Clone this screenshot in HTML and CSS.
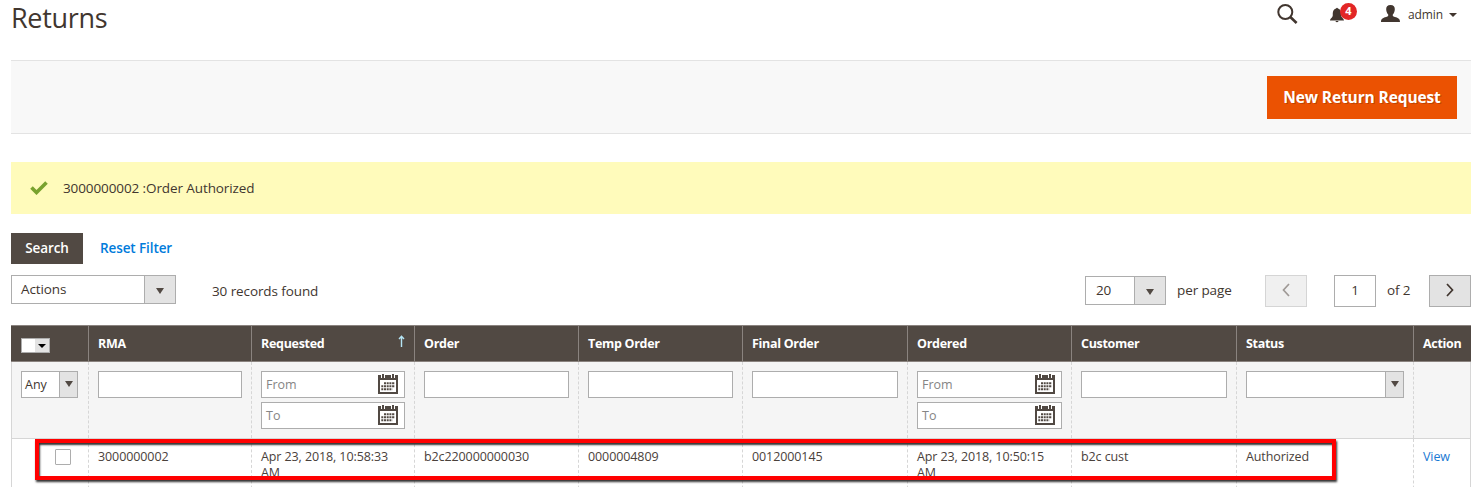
FILE: index.html
```html
<!DOCTYPE html>
<html lang="en">
<head>
<meta charset="utf-8">
<title>Returns</title>
<link rel="stylesheet" href="styles.css">
</head>
<body>
<svg width="0" height="0" class="defs">
  <symbol id="calendar" viewBox="0 0 20 20">
    <path fill="#514943" fill-rule="evenodd" d="M0 1h20v19H0zM2 6v12h16V6z"/>
    <path fill="#fff" d="M3 0h4v4H3zM13 0h4v4h-4z"/>
    <path fill="#514943" d="M4 0h2v4H4zM14 0h2v4h-2z"/>
    <path fill="none" stroke="#514943" stroke-width="2" stroke-dasharray="2 .7" d="M6 9.2h11M3.300 12.200H17M3.300 15.200h11"/>
  </symbol>
</svg>
<header class="top">
  <h1 class="title">Returns</h1>
  <div class="tools">
    <svg class="search-icon" width="21" height="20" viewBox="0 0 21 20" fill="none" stroke="#41362f"><circle cx="8.3" cy="8" r="7" stroke-width="2"/><path d="M13.3 13l6.3 6" stroke-width="2.6"/></svg>
    <div class="bell">
      <svg width="14" height="16" viewBox="0 0 14 16" fill="#41362f"><path d="M6 1.5Q7 0 8 1.5C11 2.5 11.2 5 11.2 8c0 3 2.8 3.3 2.8 5.500H0C0 11.300 2.800 11 2.800 8 2.800 5 3 2.500 6 1.500zM5.300 14h3.400q-1.700 2.500-3.400 0z"/></svg>
      <span class="badge">4</span>
    </div>
    <svg class="user-icon" width="19" height="17" viewBox="0 0 19 17" fill="#41362f"><path d="M9.500 0c3 0 4.600 1.800 4.300 4.800-.2 2.200-1 3.800-2 4.700-.3 1.600.4 2 2 2.500 3.700 1 5.200 1.700 5.200 5H0c0-3.300 1.500-4 5.200-5 1.600-.5 2.300-.9 2-2.500-1-.9-1.800-2.500-2-4.700C4.900 1.800 6.500 0 9.500 0z"/></svg>
    <span class="user">admin</span>
    <i class="caret"></i>
  </div>
</header>
<section class="actions-bar"><button class="primary">New Return Request</button></section>
<div class="message">
  <svg width="18" height="14" viewBox="0 0 18 14"><path d="M1.500 6.500l5 5L16.500 1.500" fill="none" stroke="#79a22e" stroke-width="3.600"/></svg>
  <span>3000000002 :Order Authorized</span>
</div>
<div class="filter-actions"><button class="search">Search</button><a class="reset">Reset Filter</a></div>
<div class="toolbar">
  <div class="select mass"><span>Actions</span><b><i class="arrow"></i></b></div>
  <span class="found">30 records found</span>
  <div class="pager">
    <div class="select size"><span>20</span><b><i class="arrow"></i></b></div>
    <span class="per">per page</span>
    <button class="page prev"><svg width="8" height="14" viewBox="0 0 8 14"><path d="M7 1L1.500 7 7 13"/></svg></button>
    <span class="current">1</span>
    <span class="of">of 2</span>
    <button class="page next"><svg width="8" height="14" viewBox="0 0 8 14"><path d="M1 1l5.500 6L1 13"/></svg></button>
  </div>
</div>
<main class="grid">
  <div class="row head">
    <div><span class="check-all"><b><i class="arrow"></i></b></span></div>
    <div>RMA</div>
    <div class="sorted">Requested<svg width="7" height="12" viewBox="0 0 7 12"><path d="M3.500 12V1.500M1 4l2.500-2.700L6 4" fill="none" stroke="#b5e5f5" stroke-width="1.400"/></svg></div>
    <div>Order</div><div>Temp Order</div><div>Final Order</div><div>Ordered</div><div>Customer</div><div>Status</div><div>Action</div>
  </div>
  <div class="row filters">
    <div><span class="field choice any">Any<b><i class="arrow"></i></b></span></div>
    <div><span class="field"></span></div>
    <div><span class="field date">From<svg><use href="#calendar"/></svg></span><span class="field date">To<svg><use href="#calendar"/></svg></span></div>
    <div><span class="field"></span></div>
    <div><span class="field"></span></div>
    <div><span class="field"></span></div>
    <div><span class="field date">From<svg><use href="#calendar"/></svg></span><span class="field date">To<svg><use href="#calendar"/></svg></span></div>
    <div><span class="field"></span></div>
    <div><span class="field choice"><b><i class="arrow"></i></b></span></div>
    <div></div>
  </div>
  <div class="row data">
    <div><span class="checkbox"></span></div>
    <div>3000000002</div><div>Apr 23, 2018, 10:58:33 AM</div><div>b2c220000000030</div><div>0000004809</div><div>0012000145</div><div>Apr 23, 2018, 10:50:15 AM</div><div>b2c cust</div><div>Authorized</div><div><a class="view">View</a></div>
  </div>
  <div class="highlight"></div>
</main>
</body>
</html>
```
FILE: styles.css
```css
* { box-sizing: border-box; }
body { margin: 0; padding: 0 6px 0 11px; height: 487px; overflow: hidden; background: #fff; color: #41362f; font: 13.5px "Open Sans", sans-serif; letter-spacing: -.1px; }
button { font: inherit; letter-spacing: inherit; border: 0; padding: 0; color: inherit; }
.defs { display: block; }
.top { display: flex; justify-content: space-between; height: 60px; }
.title { margin: 0; font-size: 27px; line-height: 36px; font-weight: 400; letter-spacing: -.3px; }
.tools { display: flex; align-items: flex-start; padding-right: 14px; }
.search-icon { margin-top: 4px; }
.bell { position: relative; margin: 7px 0 0 32px; width: 14px; }
.bell svg { display: block; }
.badge { position: absolute; left: 10px; top: -4px; width: 17px; height: 17px; border-radius: 50%; background: #e22626; color: #fff; font-size: 11px; font-weight: 700; line-height: 16px; text-align: center; letter-spacing: 0; }
.user-icon { margin: 5px 0 0 37px; }
.user { margin: 6px 0 0 8px; font-size: 12px; line-height: 18px; letter-spacing: -.1px; }
.caret { margin: 13px 0 0 6px; border: 4px solid transparent; border-top-color: #41362f; border-bottom: 0; }
.actions-bar { height: 74px; border: solid #e3e3e3; border-width: 1px 0; background: #f8f8f8; display: flex; justify-content: flex-end; padding: 15px 14px 0 0; }
.primary { width: 190px; height: 43px; padding-bottom: 1px; background: #eb5202; color: #fff; font-size: 15.5px; font-weight: 700; letter-spacing: -.12px; text-shadow: 1px 1px 0 rgba(0,0,0,.2); }
.message { margin-top: 28px; height: 52px; background: #fffbbb; display: flex; align-items: center; padding: 0 0 1px 19px; gap: 15px; }
.filter-actions { margin-top: 19px; display: flex; align-items: center; height: 31px; }
.search { width: 72px; height: 31px; padding-bottom: 1px; background: #514943; color: #fff; font-weight: 600; }
.reset { margin: 0 0 1px 17px; color: #007bdb; font-weight: 600; }
.toolbar { margin-top: 11px; height: 32px; display: flex; align-items: center; }
.arrow { width: 0; height: 0; border: 4px solid transparent; border-top: 6px solid #514943; border-bottom: 0; }
.select { height: 29px; border: 1px solid #adadad; display: flex; line-height: 27px; }
.select span { flex: 1; padding-left: 10px; }
.select b { width: 31px; border-left: 1px solid #adadad; background: #e3e3e3; display: flex; align-items: center; justify-content: center; padding-top: 3px; }
.mass { width: 165px; margin-bottom: 3px; }
.mass span { padding-left: 9px; }
.found { margin: 0 0 1px 36px; }
.pager { margin-left: auto; display: flex; align-items: center; }
.size { width: 81px; margin-bottom: 2px; }
.per { margin: 0 0 2px 11px; width: 88px; }
.page { width: 42px; height: 32px; border: 1px solid #adadad; background: #e3e3e3; display: flex; align-items: center; justify-content: center; padding-bottom: 2px; }
.page path { fill: none; stroke: #41362f; stroke-width: 1.7; }
.prev { opacity: .5; }
.current { margin-left: 27px; width: 42px; height: 32px; border: 1px solid #adadad; line-height: 29px; text-align: center; }
.of { margin: 0 0 2px 11px; width: 31px; }
.next { margin-left: 11px; }
.grid { position: relative; margin-top: 18px; font-size: 12.5px; }
.row { display: grid; grid-template-columns: 77px 163px 163px 164px 164px 165px 164px 165px 177px 58px; }
.row > div { border-left: 1px dashed #d6d6d6; padding: 0 9px; }
.row > div:first-child { border-left-style: solid; }
.row > div:last-child { border-right: 1px solid #d6d6d6; }
.head { height: 37px; background: #514943; color: #fff; font-weight: 700; line-height: 35px; border-top: 1px solid #8a837f; border-bottom: 1px solid #8a837f; letter-spacing: -.3px; }
.head > div, .head > div:last-child { border-left: 1px solid #8a837f; border-right-color: #514943; white-space: nowrap; }
.head > div:first-child { border-left-color: #514943; }
.check-all { display: flex; justify-content: flex-end; width: 29px; height: 15px; margin-top: 12px; background: #fff; border: 1px solid #adadad; }
.check-all b { width: 14px; background: #e3e3e3; display: flex; align-items: center; justify-content: center; }
.check-all .arrow { border-width: 4px 4px 0; border-top-color: #000; }
.sorted { display: flex; justify-content: space-between; }
.sorted svg { margin: 9px 0 0; }
.filters { height: 77px; background: #f5f5f5; border-bottom: 1px solid #d6d6d6; }
.filters > div { padding-top: 9px; }
.field { display: flex; justify-content: space-between; height: 27px; margin-bottom: 4px; border: 1px solid #adadad; background: #fff; line-height: 25px; padding-left: 4px; }
.date { color: #858585; padding-right: 6px; letter-spacing: 0; }
.date svg { width: 20px; height: 20px; margin-top: 2px; }
.any { width: 57px; padding-left: 3px; letter-spacing: 0; }
.choice b { margin-left: auto; width: 18px; border-left: 1px solid #adadad; background: #e3e3e3; display: flex; align-items: center; justify-content: center; padding-bottom: 1px; }
.data { height: 60px; line-height: 16px; color: #4a413b; }
.data > div { padding-top: 10px; }
.checkbox { display: block; margin: 0 0 0 34px; width: 16px; height: 16px; border: 1px solid #adadad; border-radius: 1px; }
.view { color: #1979d3; }
.highlight { position: absolute; left: 24px; top: 114px; width: 1301px; height: 41px; border: 4px solid #f00; box-shadow: 1px 2px 2px #333, inset 1px 2px 2px #333; }
```
